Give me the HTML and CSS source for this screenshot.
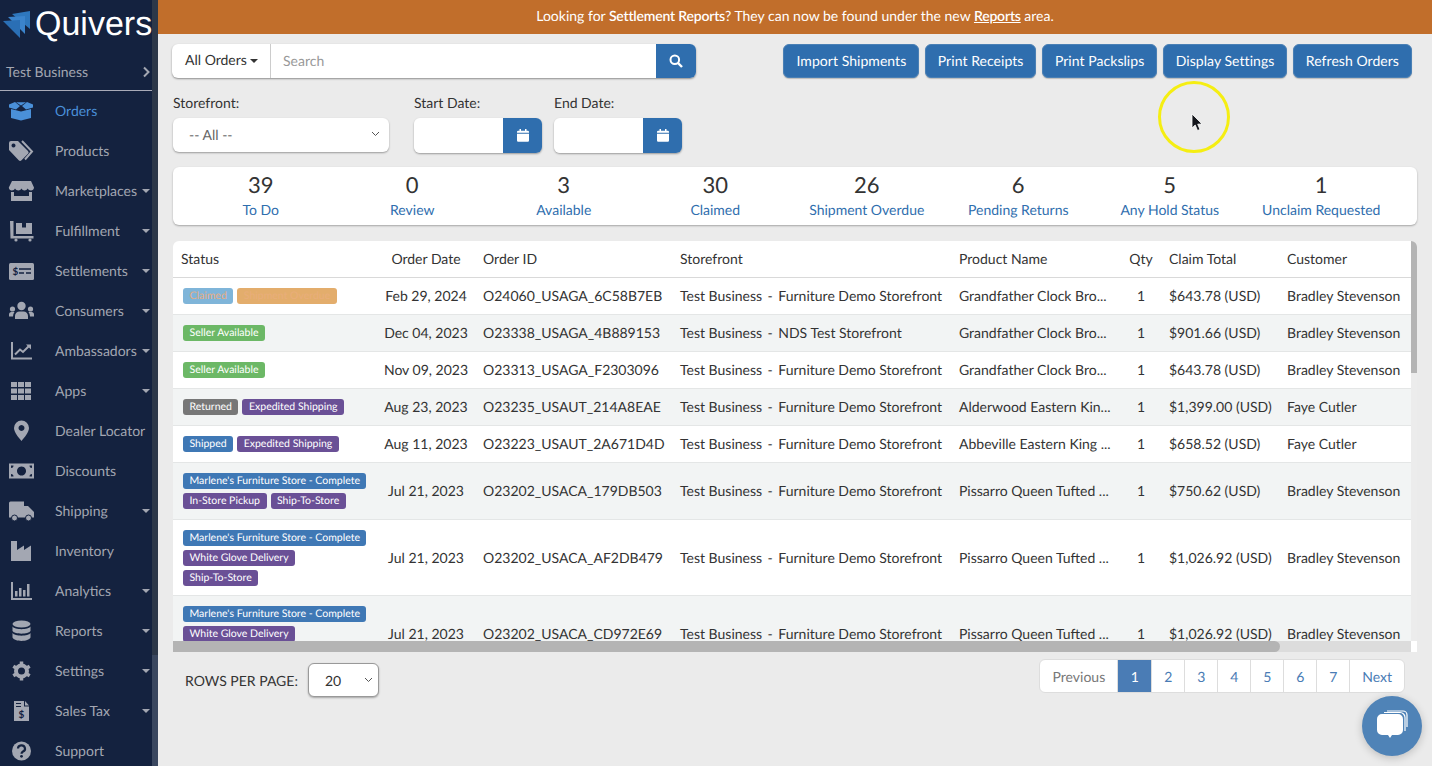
FILE: index.html
```html
<!DOCTYPE html>
<html lang="en">
<head>
<meta charset="UTF-8">
<title>Quivers - Orders</title>
<link rel="stylesheet" href="styles.css">
</head>
<body>
<div class="app">
  <div class="sidebar-wrap">
    <nav class="sidebar">
      <div class="logo">
        <svg class="logo-mark" width="28" height="28" viewBox="0 0 28 28">
          <path fill="#2e77bd" d="M9 3 L27 0 V18Z"/>
          <path fill="#3b84cc" d="M5 6 L22 5 V23Z"/>
          <path fill="#2a6fb5" d="M0 10 L17 9 V27Z"/>
        </svg>
        <span class="logo-text">Quivers</span>
      </div>
      <div class="account">
        <span>Test Business</span>
        <svg width="8" height="12" viewBox="0 0 8 12"><path d="M2 1.5 L6.5 6 L2 10.5" fill="none" stroke="#a3a7b2" stroke-width="2"/></svg>
      </div>

      <a class="nav-item active">
        <svg class="nav-icon" viewBox="0 0 26 22"><path d="M3 9 L13 11.500 L23 9 V18 L13 20.500 L3 18Z"/><path d="M1 4.500 L7 2 L12 6 L8 9.500 L1 7.500Z"/><path d="M25 4.500 L19 2 L14 6 L18 9.500 L25 7.500Z"/><path d="M8 2.200 H18 L13 5.500Z"/></svg>
        <span class="nav-label">Orders</span>
      </a>
      <a class="nav-item">
        <svg class="nav-icon" viewBox="0 0 26 22"><path fill-rule="evenodd" d="M1 3 a2 2 0 0 1 2-2 h7 l10 10 a2 2 0 0 1 0 2.800 l-6.500 6.500 a2 2 0 0 1-2.800 0 L1 10 Z M5.500 3.500 a2 2 0 1 0 0.010 0Z"/><path d="M14 1 L24 11.500 L17 19.500" fill="none" stroke="#a3a7b2" stroke-width="2"/></svg>
        <span class="nav-label">Products</span>
      </a>
      <a class="nav-item">
        <svg class="nav-icon" viewBox="0 0 26 22"><path d="M4 1 H23 L26 7.500 c0 2-1.500 3-3 3 s-2.800-1-3.300-2 c-.5 1-2 2-3.200 2 s-2.500-1-3-2 c-.5 1-2 2-3.200 2 s-2.700-1-3.300-2 c-.5 1-1.800 2-3.200 2 s-3-1-3-3Z"/><path fill-rule="evenodd" d="M3 12 H24 V21 H3Z M6 12 H21 V16 H6Z"/></svg>
        <span class="nav-label">Marketplaces</span>
        <span class="caret"></span>
      </a>
      <a class="nav-item">
        <svg class="nav-icon" viewBox="0 0 26 22"><path d="M2 1 h3.500 v15 h20 v2.500 h-23Z"/><path fill-rule="evenodd" d="M8 3 h16 v11 h-16Z M14 3 v4.500 h4 v-4.500Z"/><circle cx="8" cy="20" r="1.600"/><circle cx="22" cy="20" r="1.600"/></svg>
        <span class="nav-label">Fulfillment</span>
        <span class="caret"></span>
      </a>
      <a class="nav-item">
        <svg class="nav-icon" viewBox="0 0 26 22"><rect x="1" y="3" width="25" height="17" rx="1.500"/><text x="4.500" y="14.500" class="nav-icon-text">$</text><path d="M11 9 h12 M11 13 h5 M18 13 h5" stroke="#14223f" stroke-width="1.600"/></svg>
        <span class="nav-label">Settlements</span>
        <span class="caret"></span>
      </a>
      <a class="nav-item">
        <svg class="nav-icon" viewBox="0 0 26 22"><circle cx="13.500" cy="6" r="4.200"/><path d="M7 19 v-3 a4.500 4.500 0 0 1 4.500-4.500 h4 a4.500 4.500 0 0 1 4.500 4.500 v3Z"/><circle cx="4.500" cy="9" r="2.600"/><circle cx="22.500" cy="9" r="2.600"/><path d="M1 16.500 v-2 a2.500 2.500 0 0 1 2.500-2.500 h3 a7 7 0 0 0-1.500 4.500Z"/><path d="M26 16.500 v-2 a2.500 2.500 0 0 0-2.500-2.500 h-3 a7 7 0 0 1 1.500 4.500Z"/></svg>
        <span class="nav-label">Consumers</span>
        <span class="caret"></span>
      </a>
      <a class="nav-item">
        <svg class="nav-icon" viewBox="0 0 26 22"><path d="M3 2 h2 v15.500 h19 v2 h-21Z"/><path d="M7 14.500 L12 9.500 L15 12 L21 6" fill="none" stroke="#a3a7b2" stroke-width="2"/><path d="M18 4.500 H23 V9.500Z"/></svg>
        <span class="nav-label">Ambassadors</span>
        <span class="caret"></span>
      </a>
      <a class="nav-item">
        <svg class="nav-icon" viewBox="0 0 26 22"><rect x="3" y="2" width="6" height="5"/><rect x="10" y="2" width="6" height="5"/><rect x="17" y="2" width="6" height="5"/><rect x="3" y="8.500" width="6" height="5"/><rect x="10" y="8.500" width="6" height="5"/><rect x="17" y="8.500" width="6" height="5"/><rect x="3" y="15" width="6" height="5"/><rect x="10" y="15" width="6" height="5"/><rect x="17" y="15" width="6" height="5"/></svg>
        <span class="nav-label">Apps</span>
        <span class="caret"></span>
      </a>
      <a class="nav-item">
        <svg class="nav-icon" viewBox="0 0 26 22"><path fill-rule="evenodd" d="M13.500 0.500 a7.500 7.500 0 0 1 7.500 7.500 c0 4-4.500 9.500-7.500 13 c-3-3.500-7.500-9-7.500-13 a7.500 7.500 0 0 1 7.500-7.500Z M13.500 5 a3 3 0 1 0 0.010 0Z"/></svg>
        <span class="nav-label">Dealer Locator</span>
      </a>
      <a class="nav-item">
        <svg class="nav-icon" viewBox="0 0 26 22"><path fill-rule="evenodd" d="M1 3.500 H26 V18.500 H1Z M13.500 6.500 a4.500 4.500 0 1 0 0.010 0Z M3 5.500 v2.500 a2.500 2.500 0 0 0 2.500-2.500Z M24 5.500 h-2.500 a2.500 2.500 0 0 0 2.500 2.500Z M3 16.500 h2.500 a2.500 2.500 0 0 0-2.500-2.500Z M24 16.500 v-2.500 a2.500 2.500 0 0 0-2.500 2.500Z"/></svg>
        <span class="nav-label">Discounts</span>
      </a>
      <a class="nav-item">
        <svg class="nav-icon" viewBox="0 0 26 22"><path d="M1 3 a1.500 1.500 0 0 1 1.500-1.500 H16 V6 h4 l6 6 v5.500 H1Z"/><circle cx="6.500" cy="18" r="3" stroke="#14223f"/><circle cx="20.500" cy="18" r="3" stroke="#14223f"/></svg>
        <span class="nav-label">Shipping</span>
        <span class="caret"></span>
      </a>
      <a class="nav-item">
        <svg class="nav-icon" viewBox="0 0 26 22"><path d="M3 1 H9 V10 L16 5.500 V10 L23 5.500 V21 H3Z"/></svg>
        <span class="nav-label">Inventory</span>
      </a>
      <a class="nav-item">
        <svg class="nav-icon" viewBox="0 0 26 22"><path d="M3 2 h2 v16 h19 v2 h-21Z"/><rect x="7" y="11" width="2.500" height="5.500"/><rect x="11" y="8" width="2.500" height="8.500"/><rect x="15" y="10" width="2.500" height="6.500"/><rect x="19" y="4" width="2.500" height="12.500"/></svg>
        <span class="nav-label">Analytics</span>
        <span class="caret"></span>
      </a>
      <a class="nav-item">
        <svg class="nav-icon" viewBox="0 0 26 22"><ellipse cx="13.500" cy="4" rx="9" ry="3.500"/><path d="M4.500 6.500 c2 3.500 16 3.500 18 0 V11 c-2 3.500-16 3.500-18 0Z"/><path d="M4.500 13 c2 3.500 16 3.500 18 0 V17.500 c-2 4.500-16 4.500-18 0Z"/></svg>
        <span class="nav-label">Reports</span>
        <span class="caret"></span>
      </a>
      <a class="nav-item">
        <svg class="nav-icon" viewBox="0 0 26 22"><circle cx="13.500" cy="11" r="5.500" fill="none" stroke="#a3a7b2" stroke-width="4"/><path d="M13.500 7 V1.500 M13.500 15 V20.500 M10 9 L5.300 6.200 M17 9 L21.700 6.200 M10 13 L5.300 15.800 M17 13 L21.700 15.800" stroke="#a3a7b2" stroke-width="3.500"/></svg>
        <span class="nav-label">Settings</span>
        <span class="caret"></span>
      </a>
      <a class="nav-item">
        <svg class="nav-icon" viewBox="0 0 26 22"><path d="M6 1 H16 V6.500 H21 V21 H6Z"/><path d="M17 1 L21 5.500 H17Z"/><path d="M8 3.500 h5 M8 6.500 h5" stroke="#14223f" stroke-width="1.200"/><text x="10.500" y="17.500" class="nav-icon-text">$</text></svg>
        <span class="nav-label">Sales Tax</span>
        <span class="caret"></span>
      </a>
      <a class="nav-item">
        <svg class="nav-icon" viewBox="0 0 26 22"><circle cx="13.500" cy="11" r="9.500"/><path d="M10 8.500 a3.500 3.200 0 1 1 5 3 c-1 .6-1.500 1-1.500 2.300" fill="none" stroke="#14223f" stroke-width="2.200"/><circle cx="13.500" cy="16.300" r="1.400" fill="#14223f"/></svg>
        <span class="nav-label">Support</span>
      </a>
    </nav>
    <div class="sidebar-scroll"><div class="sidebar-thumb"></div></div>
  </div>

  <div class="page">
    <div class="banner"><span>Looking for <b>Settlement Reports</b>? They can now be found under the new <b class="banner-link">Reports</b> area.</span></div>

    <main class="main">
      <div class="toolbar">
        <div class="search-group">
          <div class="search-type">All Orders <span class="caret dark"></span></div>
          <div class="search-input">Search</div>
          <div class="icon-btn search-btn">
            <svg width="14" height="14" viewBox="0 0 14 14"><circle cx="5.800" cy="5.800" r="4.300" fill="none" stroke="#fff" stroke-width="2"/><path d="M9 9 L13 13" stroke="#fff" stroke-width="2.400"/></svg>
          </div>
        </div>
        <div class="actions">
          <a class="btn">Import Shipments</a>
          <a class="btn">Print Receipts</a>
          <a class="btn">Print Packslips</a>
          <a class="btn">Display Settings</a>
          <a class="btn">Refresh Orders</a>
        </div>
      </div>

      <div class="filters">
        <div class="filter filter-store">
          <label>Storefront:</label>
          <div class="select-box">
            <span>-- All --</span>
            <svg width="9" height="6" viewBox="0 0 9 6"><path d="M1 1 L4.500 4.500 L8 1" fill="none" stroke="#555" stroke-width="1"/></svg>
          </div>
        </div>
        <div class="filter filter-start">
          <label>Start Date:</label>
          <div class="date-group">
            <div class="date-input"></div>
            <div class="icon-btn date-btn">
              <svg width="12" height="13" viewBox="0 0 12 13"><path fill="#fff" d="M0 4.800 H12 V11.500 a1.200 1.200 0 0 1-1.200 1.200 H1.200 A1.200 1.200 0 0 1 0 11.500Z M1.200 1.700 H2.500 V0 H4 V1.700 H8 V0 H9.500 V1.700 H10.800 A1.200 1.200 0 0 1 12 2.900 V3.800 H0 V2.900 A1.200 1.200 0 0 1 1.200 1.700Z"/></svg>
            </div>
          </div>
        </div>
        <div class="filter">
          <label>End Date:</label>
          <div class="date-group">
            <div class="date-input"></div>
            <div class="icon-btn date-btn">
              <svg width="12" height="13" viewBox="0 0 12 13"><path fill="#fff" d="M0 4.800 H12 V11.500 a1.200 1.200 0 0 1-1.200 1.200 H1.200 A1.200 1.200 0 0 1 0 11.500Z M1.200 1.700 H2.500 V0 H4 V1.700 H8 V0 H9.500 V1.700 H10.800 A1.200 1.200 0 0 1 12 2.900 V3.800 H0 V2.900 A1.200 1.200 0 0 1 1.200 1.700Z"/></svg>
            </div>
          </div>
        </div>
      </div>

      <div class="stats">
        <div class="stat"><div class="stat-num">39</div><a class="stat-label">To Do</a></div>
        <div class="stat"><div class="stat-num">0</div><a class="stat-label">Review</a></div>
        <div class="stat"><div class="stat-num">3</div><a class="stat-label">Available</a></div>
        <div class="stat"><div class="stat-num">30</div><a class="stat-label">Claimed</a></div>
        <div class="stat"><div class="stat-num">26</div><a class="stat-label">Shipment Overdue</a></div>
        <div class="stat"><div class="stat-num">6</div><a class="stat-label">Pending Returns</a></div>
        <div class="stat"><div class="stat-num">5</div><a class="stat-label">Any Hold Status</a></div>
        <div class="stat"><div class="stat-num">1</div><a class="stat-label">Unclaim Requested</a></div>
      </div>

      <div class="table-panel">
        <div class="table-row-wrap">
          <div class="table-clip">
            <table class="orders">
              <colgroup>
                <col class="c-status"><col class="c-date"><col class="c-id"><col class="c-store"><col class="c-product"><col class="c-qty"><col class="c-total"><col class="c-customer">
              </colgroup>
              <thead>
                <tr><th>Status</th><th class="center">Order Date</th><th>Order ID</th><th>Storefront</th><th>Product Name</th><th class="center">Qty</th><th>Claim Total</th><th>Customer</th></tr>
              </thead>
              <tbody>
                <tr>
                  <td class="status"><div class="badges"><span class="badge claimed">Claimed</span><span class="badge overdue">Shipment Overdue</span></div></td>
                  <td class="center">Feb 29, 2024</td><td>O24060_USAGA_6C58B7EB</td><td>Test Business<span class="sep">-</span>Furniture Demo Storefront</td><td>Grandfather Clock Bro...</td><td class="center">1</td><td>$643.78 (USD)</td><td>Bradley Stevenson</td>
                </tr>
                <tr>
                  <td class="status"><div class="badges"><span class="badge green">Seller Available</span></div></td>
                  <td class="center">Dec 04, 2023</td><td>O23338_USAGA_4B889153</td><td>Test Business<span class="sep">-</span>NDS Test Storefront</td><td>Grandfather Clock Bro...</td><td class="center">1</td><td>$901.66 (USD)</td><td>Bradley Stevenson</td>
                </tr>
                <tr>
                  <td class="status"><div class="badges"><span class="badge green">Seller Available</span></div></td>
                  <td class="center">Nov 09, 2023</td><td>O23313_USAGA_F2303096</td><td>Test Business<span class="sep">-</span>Furniture Demo Storefront</td><td>Grandfather Clock Bro...</td><td class="center">1</td><td>$643.78 (USD)</td><td>Bradley Stevenson</td>
                </tr>
                <tr>
                  <td class="status"><div class="badges"><span class="badge gray">Returned</span><span class="badge purple">Expedited Shipping</span></div></td>
                  <td class="center">Aug 23, 2023</td><td>O23235_USAUT_214A8EAE</td><td>Test Business<span class="sep">-</span>Furniture Demo Storefront</td><td>Alderwood Eastern Kin...</td><td class="center">1</td><td>$1,399.00 (USD)</td><td>Faye Cutler</td>
                </tr>
                <tr>
                  <td class="status"><div class="badges"><span class="badge blue">Shipped</span><span class="badge purple">Expedited Shipping</span></div></td>
                  <td class="center">Aug 11, 2023</td><td>O23223_USAUT_2A671D4D</td><td>Test Business<span class="sep">-</span>Furniture Demo Storefront</td><td>Abbeville Eastern King ...</td><td class="center">1</td><td>$658.52 (USD)</td><td>Faye Cutler</td>
                </tr>
                <tr class="row-mid">
                  <td class="status"><div class="badges"><span class="badge blue">Marlene's Furniture Store - Complete</span><span class="badge purple">In-Store Pickup</span><span class="badge purple">Ship-To-Store</span></div></td>
                  <td class="center">Jul 21, 2023</td><td>O23202_USACA_179DB503</td><td>Test Business<span class="sep">-</span>Furniture Demo Storefront</td><td>Pissarro Queen Tufted ...</td><td class="center">1</td><td>$750.62 (USD)</td><td>Bradley Stevenson</td>
                </tr>
                <tr>
                  <td class="status"><div class="badges"><span class="badge blue">Marlene's Furniture Store - Complete</span><span class="badge purple">White Glove Delivery</span><span class="badge purple">Ship-To-Store</span></div></td>
                  <td class="center">Jul 21, 2023</td><td>O23202_USACA_AF2DB479</td><td>Test Business<span class="sep">-</span>Furniture Demo Storefront</td><td>Pissarro Queen Tufted ...</td><td class="center">1</td><td>$1,026.92 (USD)</td><td>Bradley Stevenson</td>
                </tr>
                <tr class="row-tall">
                  <td class="status"><div class="badges"><span class="badge blue">Marlene's Furniture Store - Complete</span><span class="badge purple">White Glove Delivery</span></div></td>
                  <td class="center">Jul 21, 2023</td><td>O23202_USACA_CD972E69</td><td>Test Business<span class="sep">-</span>Furniture Demo Storefront</td><td>Pissarro Queen Tufted ...</td><td class="center">1</td><td>$1,026.92 (USD)</td><td>Bradley Stevenson</td>
                </tr>
              </tbody>
            </table>
          </div>
          <div class="v-scroll"><div class="v-thumb"></div></div>
        </div>
        <div class="h-scroll"><div class="h-thumb"></div></div>
      </div>

      <div class="table-footer">
        <div class="rows-per-page">
          <span>ROWS PER PAGE:</span>
          <div class="rows-select">
            <span>20</span>
            <svg width="9" height="6" viewBox="0 0 9 6"><path d="M1 1 L4.500 4.500 L8 1" fill="none" stroke="#555" stroke-width="1"/></svg>
          </div>
        </div>
        <div class="pagination">
          <a class="page-link prev">Previous</a>
          <a class="page-link num current">1</a>
          <a class="page-link num">2</a>
          <a class="page-link num">3</a>
          <a class="page-link num">4</a>
          <a class="page-link num">5</a>
          <a class="page-link num">6</a>
          <a class="page-link num">7</a>
          <a class="page-link">Next</a>
        </div>
      </div>
    </main>
  </div>
</div>

<!-- cursor highlight from the screen recording -->
<div class="cursor-ring"></div>
<svg class="cursor" width="12" height="19" viewBox="0 0 12 19"><path d="M1 1 V15 L4.200 12 L6.500 17.500 L9 16.500 L6.700 11.200 L11 11Z" fill="#14161c" stroke="#fff" stroke-width="0.800"/></svg>

<div class="chat">
  <svg width="34" height="34" viewBox="0 0 34 34"><path d="M12 2 H28 a4 4 0 0 1 4 4 V18" fill="none" stroke="#fff" stroke-width="1.200"/><path d="M9 3.500 H25 a5 5 0 0 1 5 5 V22" fill="none" stroke="#fff" stroke-width="1.200"/><path d="M7 5 H23 a5 5 0 0 1 5 5 V21 a5 5 0 0 1-5 5 H17 L15 29 L13 26 H7 a5 5 0 0 1-5-5 V10 a5 5 0 0 1 5-5Z" fill="#fff"/></svg>
</div>
</body>
</html>
```

FILE: styles.css
```css
* {
  box-sizing: border-box;
}

html, body {
  margin: 0;
  padding: 0;
  height: 100%;
  overflow: hidden;
}

body {
  font-family: Lato, "Open Sans", sans-serif;
  font-size: 14px;
  color: #333;
  background-color: #ebebeb;
  text-rendering: geometricPrecision;
}

a {
  text-decoration: none;
  cursor: pointer;
}

.app {
  display: flex;
  height: 766px;
}

/* sidebar */
.sidebar-wrap {
  display: flex;
  flex: 0 0 158px;
  height: 766px;
  overflow: hidden;
  background-color: #14223f;
}

.sidebar {
  width: 152px;
  flex: none;
}

.sidebar-scroll {
  width: 6px;
  background-color: #3a475f;
}

.sidebar-thumb {
  height: 655px;
  background-color: #2d3849;
}

.logo {
  display: flex;
  align-items: center;
  height: 44px;
  padding: 3px 0 0 3px;
}

.logo-mark {
  flex: none;
  margin-top: 2px;
}

.logo-text {
  margin-left: 4px;
  font-family: "Liberation Sans", Arial, sans-serif;
  font-size: 34px;
  line-height: 40px;
  color: #fff;
}

.account {
  display: flex;
  align-items: center;
  justify-content: space-between;
  height: 47px;
  padding: 9px 2px 0 6px;
  border-bottom: 1px solid #a9abb8;
  color: #a3a7b2;
}

.nav-item {
  display: flex;
  align-items: center;
  height: 40px;
  padding-left: 8px;
  color: #a3a7b2;
  white-space: nowrap;
}

.nav-icon {
  flex: none;
  width: 26px;
  height: 22px;
  fill: #a3a7b2;
}

.nav-icon-text {
  font-size: 10px;
  font-weight: 700;
  fill: #14223f;
}

.nav-label {
  margin-left: 21px;
  padding-bottom: 2px;
}

.nav-item.active {
  color: #4a90d9;
}

.nav-item.active .nav-icon {
  fill: #4a90d9;
}

.caret {
  width: 0;
  height: 0;
  border-left: 4.5px solid transparent;
  border-right: 4.5px solid transparent;
  border-top: 4.5px solid #a3a7b2;
}

.nav-item .caret {
  margin-left: auto;
  margin-right: 2px;
}

.caret.dark {
  display: inline-block;
  margin-left: 0;
  vertical-align: middle;
  border-left-width: 4px;
  border-right-width: 4px;
  border-top: 4px solid #333;
}

/* main area */
.page {
  flex: 1;
  min-width: 0;
}

.banner {
  display: flex;
  align-items: center;
  justify-content: center;
  height: 34px;
  padding-bottom: 4px;
  background-color: #c16e2b;
  color: #fff;
}

.banner b {
  font-weight: 600;
  letter-spacing: -0.2px;
}

.banner-link {
  text-decoration: underline;
}

.main {
  padding: 10px 15px 0 15px;
}

.toolbar {
  display: flex;
  justify-content: space-between;
  height: 34px;
  padding-right: 5px;
}

.search-group {
  display: flex;
  width: 524px;
  height: 34px;
  margin-left: -1px;
  border-radius: 6px;
  background-color: #fff;
  box-shadow: 0 1px 2px rgba(0, 0, 0, 0.4);
}

.search-type {
  width: 99px;
  padding: 7px 0 0 13px;
  border-right: 1px solid #ccc;
  white-space: nowrap;
}

.search-input {
  flex: 1;
  padding: 8px 12px;
  color: #999;
}

.icon-btn {
  display: flex;
  align-items: center;
  justify-content: center;
  background-color: #2f6eae;
}

.search-btn {
  width: 40px;
  border-radius: 0 6px 6px 0;
}

.actions {
  display: flex;
  gap: 5.5px;
}

.btn {
  display: flex;
  align-items: center;
  padding: 0 12px 2px 12px;
  border: 1px solid #4a80b5;
  border-radius: 6px;
  background-color: #2f6eae;
  color: #fff;
  letter-spacing: 0.05px;
  box-shadow: 0 1px 1px rgba(0, 0, 0, 0.2);
  white-space: nowrap;
}

.filters {
  display: flex;
  margin-top: 16px;
}

.filter label {
  display: block;
  height: 24px;
  line-height: 18px;
}

.filter-store {
  width: 241px;
}

.filter-start {
  width: 140px;
}

.select-box {
  display: flex;
  align-items: center;
  justify-content: space-between;
  width: 216px;
  height: 34px;
  padding: 0 9px 2px 16px;
  border-radius: 6px;
  background-color: #fff;
  color: #666;
  box-shadow: 0 1px 2px rgba(0, 0, 0, 0.35);
}

.date-group {
  display: flex;
  width: 128px;
  height: 35px;
  border-radius: 6px;
  box-shadow: 0 1px 2px rgba(0, 0, 0, 0.35);
}

.date-input {
  width: 89px;
  border-radius: 6px 0 0 6px;
  background-color: #fff;
}

.date-btn {
  width: 39px;
  border-radius: 0 6px 6px 0;
}

.stats {
  display: grid;
  grid-template-columns: repeat(8, 1fr);
  width: 1244px;
  height: 58px;
  margin-top: 14px;
  padding: 6px 20px 0 12px;
  border-radius: 6px;
  background-color: #fff;
  box-shadow: 0 1px 2px rgba(0, 0, 0, 0.3);
}

.stat {
  text-align: center;
}

.stat-num {
  font-size: 22px;
  line-height: 24px;
  color: #333;
}

.stat-label {
  display: block;
  margin-top: 4px;
  line-height: 18px;
  color: #2f6eae;
}

/* orders table */
.table-panel {
  width: 1244px;
  margin-top: 16px;
  border-radius: 6px 6px 0 0;
  overflow: hidden;
  background-color: #fff;
}

.table-row-wrap {
  display: flex;
  height: 400px;
}

.table-clip {
  width: 1238px;
  overflow: hidden;
}

.orders {
  width: 1238px;
  table-layout: fixed;
  border-collapse: collapse;
}

.c-status { width: 204px; }
.c-date { width: 98px; }
.c-id { width: 197px; }
.c-store { width: 279px; }
.c-product { width: 170px; }
.c-qty { width: 40px; }
.c-total { width: 118px; }
.c-customer { width: 132px; }

.orders th {
  height: 36px;
  padding: 0 0 0 8px;
  border-bottom: 1px solid #d9d9d9;
  font-weight: 400;
  text-align: left;
  white-space: nowrap;
}

.orders td {
  height: 37px;
  padding: 0 0 0 8px;
  border-bottom: 1px solid #e4e6e6;
  white-space: nowrap;
  overflow: hidden;
}

.orders tbody tr:nth-child(even) {
  background-color: #f2f4f4;
}

.orders .row-mid td {
  height: 57px;
}

.orders .row-tall td {
  height: 76px;
}

.orders th.center, .orders td.center {
  padding: 0;
  text-align: center;
}

.orders td.status {
  padding: 10px 6px 9px 10px;
  vertical-align: top;
  white-space: normal;
}

.sep {
  margin: 0 5.5px;
}

.badges {
  display: flex;
  flex-wrap: wrap;
  gap: 4px;
}

.badge {
  height: 16px;
  padding: 0 6.5px;
  border-radius: 3px;
  font-size: 10.5px;
  line-height: 16px;
  color: #fff;
  white-space: nowrap;
}

.claimed {
  background-color: #7fb5d9;
  color: #e8ad84;
}

.overdue {
  background-color: #e3ad6c;
  color: #e9ae7b;
}

.green { background-color: #6cb866; }
.gray { background-color: #777; }
.blue { background-color: #3f78b5; }
.purple { background-color: #6a5096; }

.v-scroll {
  width: 6px;
  background-color: #ececec;
}

.v-thumb {
  height: 132px;
  background-color: #b4b4b4;
}

.h-scroll {
  width: 1238px;
  height: 11px;
  background-color: #dcdcdc;
}

.h-thumb {
  width: 1107px;
  height: 11px;
  border-radius: 0 6px 6px 0;
  background-color: #b4b4b4;
}

.table-footer {
  display: flex;
  justify-content: space-between;
  align-items: flex-start;
  width: 1232px;
  margin-top: 7px;
  padding-left: 12px;
}

.rows-per-page {
  display: flex;
  align-items: center;
  gap: 10px;
  margin-top: 4px;
}

.rows-select {
  display: flex;
  align-items: center;
  justify-content: space-between;
  width: 71px;
  height: 34px;
  padding: 0 5px 0 16px;
  border: 1px solid #999;
  border-radius: 6px;
  background-color: #fff;
  box-shadow: 0 1px 2px rgba(0, 0, 0, 0.3);
}

.pagination {
  display: flex;
  height: 34px;
  border: 1px solid #ddd;
  border-radius: 6px;
  background-color: #fff;
}

.page-link {
  display: flex;
  align-items: center;
  justify-content: center;
  padding: 0 12px;
  border-left: 1px solid #ddd;
  color: #4a7cb5;
}

.page-link.prev {
  padding: 0 12px 0 13px;
  border-left: none;
  color: #777;
}

.page-link.num {
  width: 33px;
  padding: 0;
}

.page-link.current {
  width: 34px;
  background-color: #4a7cb5;
  color: #fff;
}

/* things over the page */
.cursor-ring {
  position: absolute;
  left: 1158px;
  top: 81px;
  width: 72px;
  height: 72px;
  border: 3px solid #f5ee12;
  border-radius: 50%;
}

.cursor {
  position: absolute;
  left: 1191px;
  top: 113px;
}

.chat {
  position: absolute;
  left: 1362px;
  top: 696px;
  display: flex;
  align-items: center;
  justify-content: center;
  width: 60px;
  height: 60px;
  border-radius: 50%;
  background-color: #4f83b7;
  box-shadow: 0 2px 8px rgba(0, 0, 0, 0.2);
}
```
